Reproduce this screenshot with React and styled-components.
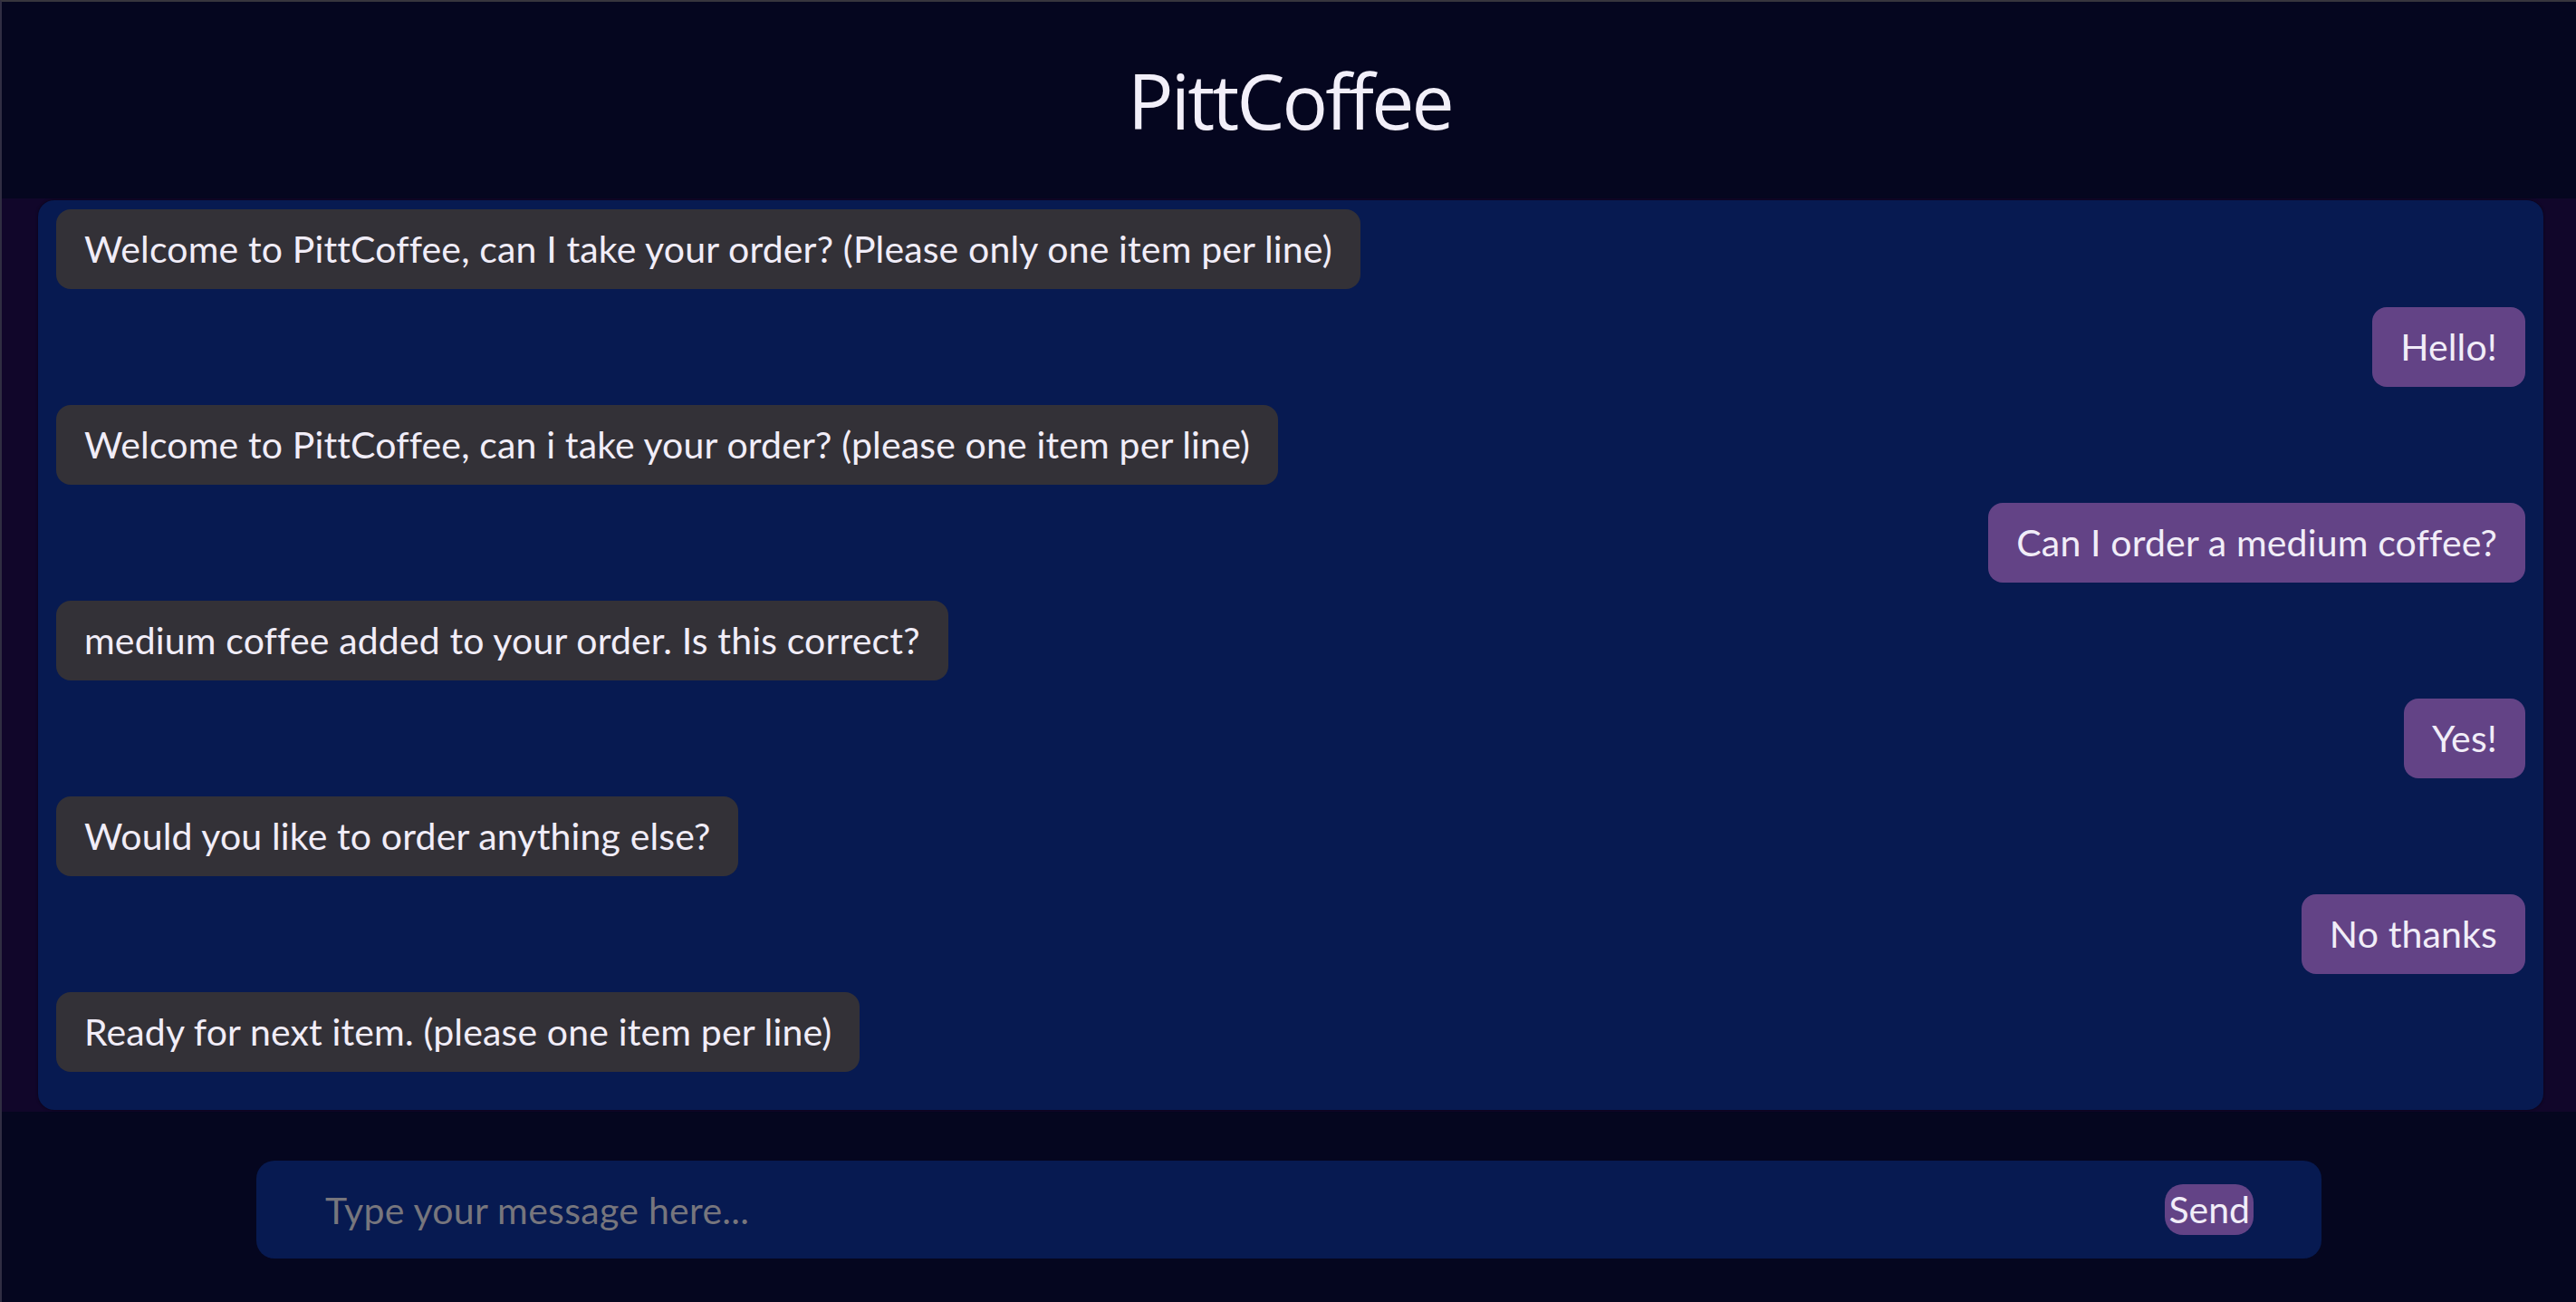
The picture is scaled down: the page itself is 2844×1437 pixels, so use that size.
import React from "react";
import styled, { createGlobalStyle } from "styled-components";

const messages = [
  { from: "bot", text: "Welcome to PittCoffee, can I take your order? (Please only one item per line)" },
  { from: "user", text: "Hello!" },
  { from: "bot", text: "Welcome to PittCoffee, can i take your order? (please one item per line)" },
  { from: "user", text: "Can I order a medium coffee?" },
  { from: "bot", text: "medium coffee added to your order. Is this correct?" },
  { from: "user", text: "Yes!" },
  { from: "bot", text: "Would you like to order anything else?" },
  { from: "user", text: "No thanks" },
  { from: "bot", text: "Ready for next item. (please one item per line)" },
];

function App() {
  return (
    <>
      <GlobalStyle />
      <Page>
        <Header>
          <Title>PittCoffee</Title>
        </Header>
        <ChatArea>
          <ChatPanel>
            {messages.map((m, i) => (
              <Bubble key={i} $user={m.from === "user"}>
                {m.text}
              </Bubble>
            ))}
          </ChatPanel>
        </ChatArea>
        <Footer>
          <InputBar>
            <MessageInput placeholder="Type your message here..." />
            <SendButton>Send</SendButton>
          </InputBar>
        </Footer>
      </Page>
    </>
  );
}

const GlobalStyle = createGlobalStyle`
  html, body {
    margin: 0;
    padding: 0;
    background: #05061f;
  }
  * {
    box-sizing: border-box;
  }
`;

const Page = styled.div`
  height: 100vh;
  display: flex;
  flex-direction: column;
  background: #05061f;
  border-left: 2px solid #302d42;
  border-top: 2px solid #37353d;
  font-family: Lato, "Liberation Sans", sans-serif;
  color: #f1edf8;
`;

const Header = styled.header`
  height: 217px;
  flex: none;
  display: flex;
  align-items: center;
  justify-content: center;
`;

const Title = styled.h1`
  margin: 0;
  font-family: "Open Sans", "Noto Sans", sans-serif;
  font-weight: 400;
  font-size: 84px;
  letter-spacing: -2.8px;
  color: #f2eff9;
  transform: translateX(1px);
`;

const ChatArea = styled.main`
  flex: 1;
  display: flex;
  background: #11062a;
  padding: 2px 36px 2px 40px;
`;

const ChatPanel = styled.div`
  flex: 1;
  display: flex;
  flex-direction: column;
  gap: 20px;
  padding: 10px 20px;
  background: #071a51;
  border-radius: 18px;
  box-shadow: 0 0 3px rgba(0, 0, 0, 0.6);
  overflow: hidden;
`;

const Bubble = styled.div`
  align-self: ${(p) => (p.$user ? "flex-end" : "flex-start")};
  background: ${(p) => (p.$user ? "#634386" : "#333137")};
  color: #f1edf8;
  font-size: 41px;
  letter-spacing: 0.15px;
  line-height: 48px;
  padding: 20px 31px;
  border-radius: 16px;
  white-space: nowrap;
`;

const Footer = styled.footer`
  height: 210px;
  flex: none;
  display: flex;
  justify-content: center;
  padding-top: 54px;
`;

const InputBar = styled.div`
  width: 2280px;
  height: 108px;
  display: flex;
  align-items: center;
  gap: 20px;
  padding: 0 75px 0 76px;
  background: #071a51;
  border-radius: 20px;
`;

const MessageInput = styled.input`
  flex: 1;
  background: transparent;
  border: none;
  outline: none;
  font-family: Lato, "Liberation Sans", sans-serif;
  font-size: 41px;
  letter-spacing: 0.3px;
  color: #f1edf8;
  padding: 0;

  &::placeholder {
    color: #77767d;
  }
`;

const SendButton = styled.button`
  height: 56px;
  padding: 0 4px;
  border: none;
  border-radius: 20px;
  background: #634386;
  color: #f1edf8;
  font-family: Lato, "Liberation Sans", sans-serif;
  font-size: 41px;
  line-height: 56px;
  cursor: pointer;
`;

export default App;
